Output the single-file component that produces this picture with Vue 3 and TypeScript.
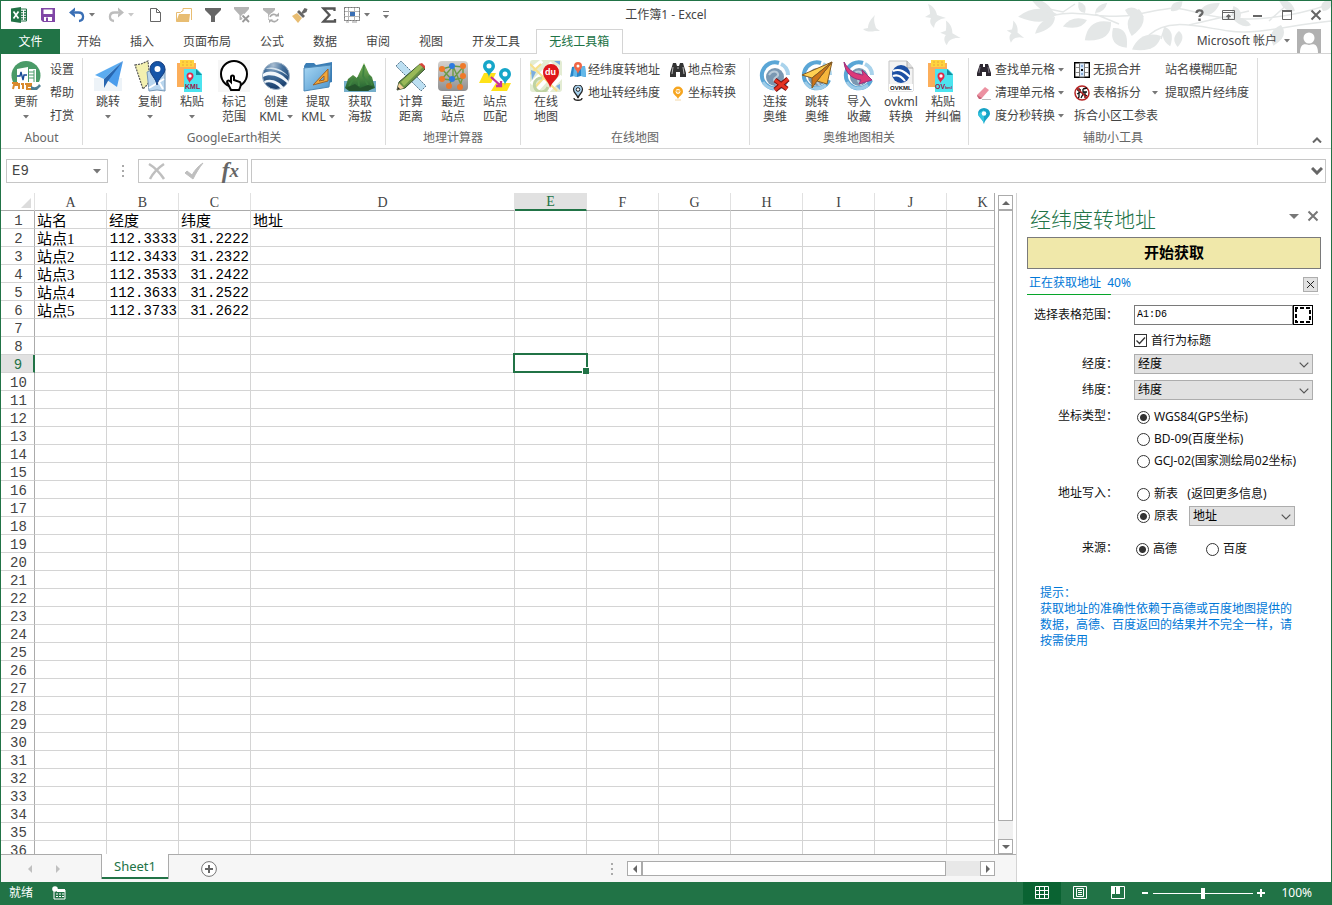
<script setup lang="ts">
import { ref } from 'vue'

interface BigButton { icon: string; lines: string[]; arrow?: boolean }
interface SmallButton { icon?: string; label: string; arrow?: boolean }
interface Group { key: string; title: string; big: BigButton[]; small: SmallButton[][] }
interface QuickItem { icon: string; label: string; arrow?: boolean; tight?: boolean }

const quickItems: QuickItem[] = [
  { icon: 'excel', label: 'Excel' },
  { icon: 'save', label: '保存' },
  { icon: 'undo', label: '撤消', arrow: true },
  { icon: 'redo', label: '恢复', arrow: true },
  { icon: 'new', label: '新建' },
  { icon: 'open', label: '打开' },
  { icon: 'funnel', label: '筛选' },
  { icon: 'funnelx', label: '清除筛选' },
  { icon: 'funnelr', label: '重新应用' },
  { icon: 'brush', label: '格式刷' },
  { icon: 'sigma', label: '求和' },
  { icon: 'gridsel', label: '边框', arrow: true, tight: true },
]

const tabs = ['开始', '插入', '页面布局', '公式', '数据', '审阅', '视图', '开发工具', '无线工具箱']
const activeTab = ref('无线工具箱')

const groups: Group[] = [
  {
    key: 'about', title: 'About',
    big: [{ icon: 'update', lines: ['更新'], arrow: true }],
    small: [[{ label: '设置' }, { label: '帮助' }, { label: '打赏' }]],
  },
  {
    key: 'earth', title: 'GoogleEarth相关',
    big: [
      { icon: 'plane', lines: ['跳转'], arrow: true },
      { icon: 'copymap', lines: ['复制'], arrow: true },
      { icon: 'paste', lines: ['粘贴'], arrow: true },
      { icon: 'touch', lines: ['标记', '范围'] },
      { icon: 'globe', lines: ['创建', 'KML'], arrow: true },
      { icon: 'folder', lines: ['提取', 'KML'], arrow: true },
      { icon: 'mountain', lines: ['获取', '海拔'] },
    ],
    small: [],
  },
  {
    key: 'calc', title: '地理计算器',
    big: [
      { icon: 'ruler', lines: ['计算', '距离'] },
      { icon: 'network', lines: ['最近', '站点'] },
      { icon: 'match', lines: ['站点', '匹配'] },
    ],
    small: [],
  },
  {
    key: 'online', title: '在线地图',
    big: [{ icon: 'dumap', lines: ['在线', '地图'] }],
    small: [
      [{ icon: 'mappin', label: '经纬度转地址' }, { icon: 'pin', label: '地址转经纬度' }],
      [{ icon: 'binoc', label: '地点检索' }, { icon: 'convert', label: '坐标转换' }],
    ],
  },
  {
    key: 'ovi', title: '奥维地图相关',
    big: [
      { icon: 'ovlink', lines: ['连接', '奥维'] },
      { icon: 'ovjump', lines: ['跳转', '奥维'] },
      { icon: 'ovimport', lines: ['导入', '收藏'] },
      { icon: 'ovkml', lines: ['ovkml', '转换'] },
      { icon: 'ovpaste', lines: ['粘贴', '并纠偏'] },
    ],
    small: [],
  },
  {
    key: 'tools', title: '辅助小工具',
    big: [],
    small: [
      [
        { icon: 'binoc2', label: '查找单元格', arrow: true },
        { icon: 'eraser', label: '清理单元格', arrow: true },
        { icon: 'teal', label: '度分秒转换', arrow: true },
      ],
      [{ icon: 'merge', label: '无损合并' }, { icon: 'split', label: '表格拆分', arrow: true }, { label: '拆合小区工参表' }],
      [{ label: '站名模糊匹配' }, { label: '提取照片经纬度' }],
    ],
  },
]

const columns = ['A', 'B', 'C', 'D', 'E', 'F', 'G', 'H', 'I', 'J', 'K']
const rowNumbers = Array.from({ length: 36 }, (_, i) => i + 1)
const cells: Record<string, string> = { A1: '站名', B1: '经度', C1: '纬度', D1: '地址' }
const points = [['112.3333', '31.2222'], ['112.3433', '31.2322'], ['112.3533', '31.2422'], ['112.3633', '31.2522'], ['112.3733', '31.2622']]
points.forEach(([lng, lat], i) => {
  cells[`A${i + 2}`] = `站点${i + 1}`
  cells[`B${i + 2}`] = lng
  cells[`C${i + 2}`] = lat
})
const isNumeric = (id: string) => /^\d/.test(cells[id] ?? '')

const range = ref('A1:D6')
const hasHeader = ref(true)
const coordType = ref('wgs')
const target = ref('old')
const source = ref('gaode')
const zoom = ref(50)

/* x, y, angle, length, half width of each leaf */
const leaves = [
  [208, 13, 176, 39, 13], [206, 16, 140, 26, 9], [205, 12, 212, 28, 8],
  [236, 12, 240, 13, 7], [246, 12, 320, 16, 6], [238, 19, 165, 25, 9], [262, 21, 145, 32, 17],
  [264, 27, 55, 24, 14], [290, 8, 105, 28, 15], [276, 9, 20, 20, 10], [312, 35, 155, 32, 14],
  [316, 26, 75, 20, 9], [330, 30, 95, 16, 8], [322, 10, 320, 15, 8], [350, 14, 330, 24, 10],
  [390, 20, 250, 16, 9], [402, 24, 200, 20, 7], [432, 24, 110, 22, 12], [446, 10, 215, 20, 8],
  [474, 10, 300, 14, 9],
]
/* x, y, rotation, scale of each bird */
const birds = [[87, 16, 0, 1], [102, 34, 12, 1], [167, 33, 20, 0.9]]
</script>

<template>
  <div class="window">
    <svg class="sprites" aria-hidden="true">
      <defs>
        <radialGradient id="gGlobe" cx=".4" cy=".1" r=".9"><stop offset="0" stop-color="#a9bed2" /><stop offset=".4" stop-color="#44709c" /><stop offset="1" stop-color="#173c6a" /></radialGradient>
        <linearGradient id="gFolder" x1="0" y1="0" x2="1" y2="1"><stop offset="0" stop-color="#a9d8f4" /><stop offset="1" stop-color="#4a93cc" /></linearGradient>
        <linearGradient id="gHill" x1="0" y1="0" x2="0" y2="1"><stop offset="0" stop-color="#7fb557" /><stop offset="1" stop-color="#1d5f30" /></linearGradient>
        <linearGradient id="gGrey" x1="0" y1="0" x2="0" y2="1"><stop offset="0" stop-color="#d5d2cf" /><stop offset="1" stop-color="#8f8f90" /></linearGradient>
        <symbol id="down" viewBox="0 0 6 4"><path d="M0 0h6L3 3.500z" fill="currentColor" /></symbol>
        <symbol id="excel" viewBox="0 0 16 16"><path d="M9 2h6.500v12H9z" fill="#fff" stroke="#217346" /><path d="M10 4.500h2M13 4.500h2M10 7h2M13 7h2M10 9.500h2M13 9.500h2M10 12h2M13 12h2" stroke="#217346" stroke-width="1.300" /><path d="M0 1.500 10 0v16L0 14.500z" fill="#217346" /><path d="M2.500 4.500 7.500 11.500M7.500 4.500l-5 7" stroke="#fff" stroke-width="1.700" /></symbol>
        <symbol id="save" viewBox="0 0 16 16"><path d="M1 1h14v14H3l-2-2z" fill="#8046a6" /><path d="M3.500 2.500h9V7h-9zM4 10h8v4H4z" fill="#fff" /><path d="M6 10.500h2v4H6z" fill="#8046a6" /></symbol>
        <symbol id="undo" viewBox="0 0 16 16"><path d="M2 5.500h7.500c6 0 6 8 .5 8.500" fill="none" stroke="#3a6fb5" stroke-width="2.300" /><path d="M0 5.500 6 .5v3L4 5.500l2 2v3z" fill="#3a6fb5" /></symbol>
        <symbol id="redo" viewBox="0 0 16 16"><path d="M14 5.500H6.500c-6 0-6 8-.5 8.500" fill="none" stroke="#bdbdbd" stroke-width="2.300" /><path d="m16 5.500-6-5v3l2 2-2 2v3z" fill="#bdbdbd" /></symbol>
        <symbol id="new" viewBox="0 0 16 16"><path d="M3.500 1.500h6l4 4v9h-10zM9.500 1.500v4h4" fill="#fff" stroke="#666" /></symbol>
        <symbol id="open" viewBox="0 0 16 16"><path d="M.5 14V5.500h4L6 4h1V1.500h8.500V13" fill="#fff" stroke="#e8bd72" /><path d="M0 15 3 7h11l-1 8z" fill="#e8bd72" /></symbol>
        <symbol id="funnel" viewBox="0 0 16 16"><path d="M0 1h16v2L10 9v6H6V9L0 3z" fill="#666" /></symbol>
        <symbol id="funnelx" viewBox="0 0 16 16"><path d="M0 0h15v2L9.500 8v5h-4V8L0 2z" fill="#b5b5b5" /><path d="m8 8 7 7M15 8l-7 7" stroke="#fff" stroke-width="4" /><path d="m8.500 8.500 6.500 6.500M15 8.500 8.500 15" stroke="#999" stroke-width="1.800" /></symbol>
        <symbol id="funnelr" viewBox="0 0 16 16"><path d="M0 1h12v2L8 7v6H5V7L0 3z" fill="#b5b5b5" /><circle cx="11" cy="11" r="5.500" fill="#fff" /><path d="M7 10a4 4 0 0 1 7-1M15 12a4 4 0 0 1-7 1" fill="none" stroke="#aaa" stroke-width="1.600" /><path d="M12 9.500h4V5.500zM10 12.500H6v3.500z" fill="#aaa" /></symbol>
        <symbol id="brush" viewBox="0 0 16 16"><path d="m0 9 5-3 5 5-4 5z" fill="#e8bd72" /><path d="m5 5 2-2 6 6-2 2z" fill="#666" /><path d="m9.500 5.500 3-4.500 3 1-1 3-4 2z" fill="#666" /></symbol>
        <symbol id="sigma" viewBox="0 0 16 16"><path d="M13.500 4V1.500h-11L8.500 8l-6 6.500h11.500V12" fill="none" stroke="#555" stroke-width="2.300" /></symbol>
        <symbol id="gridsel" viewBox="0 0 16 16"><path d="M.5.5h15v13H.5zM.5 4.500h15M.5 9.500h15M4.500.5v13M10.500.5v13" fill="#fff" stroke="#b5b5b5" /><path d="M6 5h5v4H6z" fill="#3a6fb5" /><path d="M.5.5h15v13H.5z" fill="none" stroke="#777" stroke-dasharray="2 1" /><path d="M2 15h3M8 15h5" stroke="#999" /></symbol>
        <symbol id="update" viewBox="0 0 32 32"><circle cx="16" cy="15.500" r="14.500" fill="#4a9b68" /><path d="M2 22h28v8H2z" fill="#fff" /><path d="m7 9 11-2v17L7 23zM19 9h7v13h-7z" fill="#fff" /><path d="M19 12h5M19 15h5M19 18h5M24 10v12" stroke="#4a9b68" /><path d="M7 16h3l1-4 2 8 1-5h3" fill="none" stroke="#174a96" stroke-width="1.400" /><path d="M2 23h5v2H4l-1 4M9 23v6M11 24h2v5M15 24h6v2h-4v3h4" stroke="#d98a2c" stroke-width="2" fill="none" /><path d="M21 25c2 4 7 2 8-1l2 2-4 4h-6z" fill="#4c7f93" /></symbol>
        <symbol id="plane" viewBox="0 0 32 32"><path d="M2 18h28v13H2z" fill="#edf3f8" /><path d="M31 1 3 15l9 4z" fill="#5cacf0" /><path d="M31 1 15 20l10 7z" fill="#4a9cec" /><path d="M31 1 12 19v9l4-7z" fill="#2766b0" /></symbol>
        <symbol id="copymap" viewBox="0 0 32 32"><path d="m1 5 6-1 7-3 2 20-4 5-3 3z" fill="#f3f0b0" stroke="#555" stroke-width="1.200" stroke-dasharray="2 1" /><path d="m13 12 5-2 13-1v22l-8-1-8 1z" fill="#b9d6ee" stroke="#7798b8" /><path d="m15 28 15-9M19 12l10 17" stroke="#fff" stroke-width="2" /><path d="M23 25C22 18 16 15 16 9a7.500 7.500 0 0 1 15 0c0 6-7 9-8 16z" fill="#1555a8" stroke="#143b7b" /><circle cx="23.500" cy="9" r="3" fill="#fff" /></symbol>
        <symbol id="pasteboard" viewBox="0 0 32 32"><path d="M1 3h19v24H1z" fill="#fcae5a" /><path d="M4 0h14v7H4z" fill="#ffd53e" /><path d="M6 2h2M10 2h2M14 2h2M6 5h2M10 5h2M14 5h2" stroke="#e8a63a" /><path d="M8 9h13l5 5v18H8z" fill="#4be4ef" /><path d="m20 9 6 6h-6z" fill="#138e9f" /><path d="M13.500 23c-1-3-3-4-3-7a3.500 3.500 0 1 1 7 0c0 3-3 4-4 7z" fill="#e22849" /><circle cx="14" cy="16" r="1.700" fill="#fff" /></symbol>
        <symbol id="paste" viewBox="0 0 32 32"><use href="#pasteboard" /><text x="9" y="29" font-size="7" font-weight="700" font-family="Liberation Sans" fill="#9d1748">KML</text></symbol>
        <symbol id="ovpaste" viewBox="0 0 32 32"><use href="#pasteboard" /><text x="8" y="29" font-size="7" font-weight="700" font-family="Liberation Sans" fill="#9d1748">OV<tspan font-size="4">kml</tspan></text></symbol>
        <symbol id="touch" viewBox="0 0 32 32"><path d="M0 0h32v32H0z" fill="#f6f6f6" /><circle cx="16" cy="14" r="13" fill="#fff" stroke="#000" stroke-width="2" /><path d="M9 22c0-2 2-2 4 0v-5c0-2 3-2 3 0v3l6 2c1 1 1 4-1 8h-8z" fill="#fff" stroke="#000" stroke-width="2" /></symbol>
        <symbol id="globe" viewBox="0 0 32 32"><circle cx="16" cy="16" r="13.500" fill="url(#gGlobe)" stroke="#9fb4c8" /><path d="M3 14c8-6 20 0 26 8l-1 2C20 16 10 13 3 17zM4 21c7-3 15 0 20 7l-3 1C16 23 10 21 5 23z" fill="#f1f6fa" /><path d="M7 8c8-2 16 2 22 9C23 12 14 8 6 9z" fill="#d7e4ee" /></symbol>
        <symbol id="folder" viewBox="0 0 32 32"><path d="m2 6 2-3h8l2 2 16-3v20L4 30z" fill="#3a7db5" /><path d="m2 8 27-3-2 22-25 4z" fill="url(#gFolder)" stroke="#4a88b8" /><path d="m11 25 15-4V9zM17 21l5-5v4z" fill="#f2a638" fill-rule="evenodd" stroke="#9b632b" /></symbol>
        <symbol id="mountain" viewBox="0 0 32 32"><path d="M0 20h32v12H0z" fill="#76afcb" /><path d="M0 12h32v9H0z" fill="#fff" /><path d="m1 28 3-9 5-4 4 3 7-15 5 11 3 3 3 11-8 3H5z" fill="url(#gHill)" /><path d="m20 5-1 11 5 9M10 18l-5 8M14 17l1 9M25 16l3 9" fill="none" stroke="#3f8340" stroke-width="1.800" /><path d="m2 28 9-4 5 4 8-3 6 2-6 4H7z" fill="#24542c" /></symbol>
        <symbol id="ruler" viewBox="0 0 32 32"><path d="m1 6 5-5 25 25-5 5z" fill="#bcdff2" stroke="#55758c" stroke-dasharray="2 1" /><path d="m2 30 2-8L25 4l5 5L10 28z" fill="#689145" stroke="#36512f" /><path d="m6 22 19-18 3 3L9 26z" fill="#99b958" /><path d="m24 4 3-1 3 3v3z" fill="#d6473b" /><path d="m2 30 2-7 5 5z" fill="#f3ce98" /><path d="m2 30 1-3 2 2z" fill="#222" /></symbol>
        <symbol id="network" viewBox="0 0 32 32"><rect x="1" y="1" width="30" height="30" rx="4" fill="url(#gGrey)" /><path d="M5 9 16 6l10 1M5 9l10 11M16 6 5 19M16 6v14M16 6l9 21M26 7 15 20M26 7v11L15 20 5 19M15 19 12 26M26 16l-3 10" fill="none" stroke="#6b9a45" stroke-width="1.400" /><g fill="#ee792a"><circle cx="5" cy="9" r="3" /><circle cx="26" cy="6" r="3" /><circle cx="26" cy="16" r="3" /><circle cx="5" cy="19" r="3" /><circle cx="12" cy="26" r="3" /><circle cx="23" cy="27" r="3" /></g><g fill="#2d7ae0"><circle cx="15" cy="6" r="3" /><circle cx="15" cy="19" r="3" /></g></symbol>
        <symbol id="match" viewBox="0 0 32 32"><path d="m0 23 5-10h12l-5 10zM12 31l5-8h15l-4 8z" fill="#ffe219" /><path d="m12 17 10 9m0-5v5h-5" fill="none" stroke="#c8329a" stroke-width="2.300" /><path d="M10 18C10 12 4 11 4 6a6 6 0 0 1 12 0c0 5-6 6-6 12zM26 26c0-7-6-7-6-12a6 6 0 0 1 12 0c0 5-6 6-6 12z" fill="#16a6c9" /><circle cx="10" cy="6" r="2.500" fill="#fff" /><circle cx="26" cy="14" r="2.500" fill="#fff" /></symbol>
        <symbol id="dumap" viewBox="0 0 32 32"><rect width="32" height="32" rx="3" fill="#e3ecd3" /><path d="M3 8 12 1M1 24 22 3M6 31 28 7M18 31 32 16" stroke="#fff" stroke-width="4" /><path d="M0 14 11 4M5 27l20-21M0 4l27 27" stroke="#f6e08a" stroke-width="2" /><path d="m1 10 5 2-4 8zM24 1h6v4zM26 26l4-2v6z" fill="#7aaee0" /><path d="M18 27a7 7 0 1 1-6-9" stroke="#bfd3a2" stroke-width="3" fill="none" /><path d="M20 28c-1-7-7-9-7-16a8 8 0 0 1 16 0c0 7-7 9-9 16z" fill="#df171a" /><text x="15" y="15" font-size="9" font-weight="700" font-family="Liberation Sans" fill="#fff">du</text></symbol>
        <symbol id="mappin" viewBox="0 0 16 16"><path d="m0 15 2-10 5-1 3 1 5-1 1 11-5-1-4 1-3-1z" fill="#2685c8" /><path d="m4 5-1 9 4 1V5zM11 5l4-1 1 11-5-1z" fill="#63b8e9" /><path d="M8 12C7 8 4 7 4 4a4 4 0 0 1 8 0c0 3-3 4-4 8z" fill="#f16645" /><circle cx="8" cy="4" r="1.500" fill="#fff" /></symbol>
        <symbol id="pin" viewBox="0 0 16 16"><path d="M8 13C7 9 3.500 8 3.500 4.500a4.500 4.500 0 0 1 9 0C12.500 8 9 9 8 13z" fill="#a8d3f0" stroke="#222" stroke-width="1.200" /><circle cx="8" cy="4.500" r="1.800" fill="#fff" stroke="#222" /><path d="M4 13c0 3 8 3 8 0" fill="none" stroke="#222" stroke-width="1.300" /></symbol>
        <symbol id="binoc" viewBox="0 0 16 16"><path d="M3 1h3l1 3h2l1-3h3l3 10v4h-6v-5H6v5H0v-4z" fill="#333" /><path d="m3 5-1 7M13 5l1 7M7 6h2" stroke="#b5b5b5" /></symbol>
        <symbol id="binoc2" viewBox="0 0 16 16"><path d="M4 2h3v3h2V2h3l3 9v3h-5v-4H6v4H1v-3z" fill="#2c2730" /><path d="m4 5-1 6M12 5l1 6" stroke="#776f7c" /></symbol>
        <symbol id="convert" viewBox="0 0 16 16"><path d="M8 14C7 11 3 10 3 6.500a5 5 0 0 1 10 0C13 10 9 11 8 14z" fill="#f6a51f" /><circle cx="8" cy="6.500" r="2.400" fill="#fff" /><path d="M8 5v3M6 6h4" stroke="#f6a51f" /><path d="M5 15h6" stroke="#f3d8a6" /></symbol>
        <symbol id="ovglobe" viewBox="0 0 32 32"><path d="M20 3A13 13 0 1 0 28 20" fill="none" stroke="#5aa6d6" stroke-width="4" /><path d="M22 4a12 12 0 0 1 7 11" fill="none" stroke="#a9d3ec" stroke-width="4" /><circle cx="16" cy="17" r="9" fill="#7a98b2" /><path d="M10 15c3-5 8-4 9-1s-4 3-4 6 3 3 3 5" stroke="#b9cbd8" stroke-width="2" fill="none" /><path d="M4 22c4 7 14 9 21 3" fill="none" stroke="#9ccbe8" stroke-width="3" /></symbol>
        <symbol id="ovlink" viewBox="0 0 32 32"><use href="#ovglobe" /><path d="m16 20 12 9M29 19 16 30" stroke="#761010" stroke-width="5" /><path d="m16 20 12 9M29 19 16 30" stroke="#e53322" stroke-width="3" /></symbol>
        <symbol id="ovjump" viewBox="0 0 32 32"><use href="#ovglobe" /><path d="M31 2 1 15l10 3z" fill="#ffd052" stroke="#825a23" /><path d="M31 2 16 21l10 3z" fill="#f6b63c" stroke="#825a23" /><path d="M31 2 11 18v10l5-7z" fill="#cc741a" stroke="#825a23" /></symbol>
        <symbol id="ovimport" viewBox="0 0 32 32"><use href="#ovglobe" /><path d="M1 2c5 9 11 12 19 13l-1-5 10 10-13 4 2-4C9 19 2 13 1 2z" fill="#dc3a78" stroke="#9a2f7c" /></symbol>
        <symbol id="ovkml" viewBox="0 0 32 32"><path d="M4 1h18l6 7v23H4z" fill="#f3f3f3" stroke="#c5c5c5" /><path d="M22 1v7h6" fill="#ddd" stroke="#aaa" /><circle cx="16" cy="14" r="9" fill="#1d50a4" /><path d="M8 11c7-3 12 1 17 6M8 16c5-2 9 1 12 5" stroke="#fff" stroke-width="2" fill="none" /><path d="M4 24h24v7H4z" fill="#fff" /><text x="5" y="30" font-size="6" font-weight="700" font-family="Liberation Sans" fill="#111">OVKML</text></symbol>
        <symbol id="eraser" viewBox="0 0 16 16"><path d="M1 10 9 2l4 3-7 8H3z" fill="#ec91a1" /><path d="m1 10 5 3-1 1H3l-2-3z" fill="#c96378" /><path d="M6 14.500h9" stroke="#bbb" /></symbol>
        <symbol id="teal" viewBox="0 0 16 16"><path d="M8 16C7 11 2 9 2 5.500a6 5.500 0 0 1 12 0C14 9 9 11 8 16z" fill="#17a3c6" /><path d="M8 16C7 11 2 9 2 5.500L8 2z" fill="#34c4df" /><circle cx="8" cy="5.500" r="2.300" fill="#fff" /></symbol>
        <symbol id="merge" viewBox="0 0 16 16"><path d="M.7.7h14.600v14.600H.7z" fill="#fff" stroke="#000" stroke-width="1.400" /><path d="M1 5.500h14M1 10.500h14" stroke="#888" /><path d="M5.500 1h5v14h-5z" fill="#d7e8fa" stroke="#777" /><path d="M8 3v2M8 11v2" stroke="#3a6fb5" /><path d="M7 8h2M8 7v2" stroke="#000" stroke-width="1.600" /></symbol>
        <symbol id="split" viewBox="0 0 16 16"><circle cx="8" cy="8" r="7" fill="#fff" stroke="#b62323" stroke-width="1.500" /><path d="M3 5h4M5 3v9l-1 1M3 9l4-2M9 4l4-1M9 4v5l-2 4M9 7h4M11 7v6M10 9l3 2" stroke="#111" stroke-width="1.300" fill="none" /><path d="m3 3 10 10" stroke="#b62323" stroke-width="1.500" /></symbol>
      </defs>
    </svg>

    <header class="top">
      <svg class="decor" viewBox="0 0 482 52" aria-hidden="true">
        <g fill="none" stroke="#e4e7e7" stroke-width="1.500">
          <path d="M206 14c25-6 50 6 84-1s35-8 60-1 70 12 132-9M300 34c20-18 50-8 80-4s60-6 102-10M246 13l24 10M340 24l60-14M316 26l-4 12M420 20l20-18M200 8l14 3 12-8" />
        </g>
        <g fill="#e4e7e7">
          <path v-for="(l, i) in leaves" :key="i" :transform="`translate(${l[0]} ${l[1]}) rotate(${l[2]})`" :d="`M0 0Q${l[3] / 3} ${-l[4]} ${l[3]} 0Q${l[3] / 2} ${l[4]} 0 0`" />
          <path d="M26 14c-4 4-7 8-7 13l-5 1c3 3 8 3 12 2l5 0-4-3c-1-4-3-8-1-13z" />
          <path v-for="(b, i) in birds" :key="'b' + i" :transform="`translate(${b[0]} ${b[1]}) rotate(${b[2]}) scale(${b[3]})`" d="M-8-13c5 2 8 6 9 11l9 3-5 1c-3 2-6 2-7 9-3-3-5-6-3-10l-6-1 5-3c0-4-1-7-2-10z" />
        </g>
      </svg>

      <div class="titlebar">
        <div class="quick">
          <button v-for="q in quickItems" :key="q.icon" type="button" class="q" :class="{ tight: q.tight }" :aria-label="q.label">
            <svg class="i16"><use :href="'#' + q.icon" /></svg>
            <svg v-if="q.arrow" class="arrow" :class="{ pale: q.icon === 'redo' }"><use href="#down" /></svg>
          </button>
          <button type="button" class="q" aria-label="自定义快速访问工具栏">
            <svg class="more" viewBox="0 0 6 8"><path d="M0 .5h6" stroke="#777" /><path d="M0 4h6L3 7.500z" fill="#777" /></svg>
          </button>
        </div>
        <h1>工作簿1 - Excel</h1>
        <div class="controls">
          <button type="button" aria-label="帮助"><svg class="i16" viewBox="0 0 16 16"><path d="M4.500 6c0-3.500 6-3.500 6-.5 0 2.500-3 2.500-3 4.500" fill="none" stroke="#666" stroke-width="2.300" /><path d="M6.300 11.500h2.400v2.400H6.300z" fill="#666" /></svg></button>
          <button type="button" aria-label="功能区显示选项"><svg class="i16" viewBox="0 0 16 16"><path d="M1.500 3.500h12v9h-12zM1.500 5.500h12" fill="none" stroke="#666" /><path d="M7.500 12V8.500M5.500 10l2-2 2 2" fill="none" stroke="#666" stroke-width="1.500" /></svg></button>
          <button type="button" aria-label="最小化"><svg class="i16" viewBox="0 0 16 16"><path d="M3 9h9" stroke="#666" stroke-width="2" /></svg></button>
          <button type="button" aria-label="最大化"><svg class="i16" viewBox="0 0 16 16"><path d="M3.500 3.500h9v9h-9z" fill="none" stroke="#666" /><path d="M3 4h10" stroke="#666" stroke-width="2" /></svg></button>
          <button type="button" aria-label="关闭"><svg class="i16" viewBox="0 0 16 16"><path d="m3.500 3.500 9 9M12.500 3.500l-9 9" stroke="#666" stroke-width="2" /></svg></button>
        </div>
      </div>

      <nav class="tabs">
        <button type="button" class="file">文件</button>
        <button v-for="t in tabs" :key="t" type="button" class="tab" :class="{ active: t === activeTab }" @click="activeTab = t">{{ t }}</button>
        <button type="button" class="account">
          Microsoft 帐户
          <svg class="arrow"><use href="#down" /></svg>
          <svg class="avatar" viewBox="0 0 24 24"><path d="M0 0h24v24H0z" fill="#b1b1b1" /><circle cx="12" cy="9" r="5.500" fill="#fff" /><path d="M3 24c0-9 4-10 9-8 5-2 9-1 9 8z" fill="#fff" /></svg>
        </button>
      </nav>
    </header>

    <section class="ribbon">
      <div v-for="g in groups" :key="g.key" class="group" :class="g.key">
        <div class="items">
          <button v-for="b in g.big" :key="b.icon" type="button" class="big">
            <svg class="i32"><use :href="'#' + b.icon" /></svg>
            <span class="cap">{{ b.lines[0] }}</span>
            <span class="cap row">{{ b.lines[1] }}<svg v-if="b.arrow" class="arrow"><use href="#down" /></svg></span>
          </button>
          <div v-for="(col, ci) in g.small" :key="ci" class="col">
            <button v-for="s in col" :key="s.label" type="button" class="small">
              <svg v-if="s.icon" class="i16"><use :href="'#' + s.icon" /></svg>
              <span>{{ s.label }}</span>
              <svg v-if="s.arrow" class="arrow end"><use href="#down" /></svg>
            </button>
          </div>
        </div>
        <div class="gtitle">{{ g.title }}</div>
      </div>
      <button type="button" class="collapse" aria-label="折叠功能区"><svg viewBox="0 0 10 6"><path d="m1 5.500 4-4 4 4" fill="none" stroke="#666" stroke-width="2" /></svg></button>
    </section>

    <section class="formula">
      <label class="namebox"><input value="E9" aria-label="名称框" /><svg viewBox="0 0 8 5"><path d="M0 0h8L4 4.500z" fill="#777" /></svg></label>
      <svg class="dots" viewBox="0 0 2 12"><path d="M0 0h2v2H0zM0 5h2v2H0zM0 10h2v2H0z" fill="#aaa" /></svg>
      <div class="fx">
        <button type="button" aria-label="取消"><svg viewBox="0 0 20 20"><path d="M2 3c5 3 11 9 15 15M17 3C11 7 6 12 3 18" fill="none" stroke="#bfbfbf" stroke-width="2.500" /></svg></button>
        <button type="button" aria-label="输入"><svg viewBox="0 0 20 20"><path d="m1 12 2-2 5 4C11 9 14 5 19 2c-4 5-7 10-10 16z" fill="#bfbfbf" stroke="#bfbfbf" /></svg></button>
        <button type="button" class="fn" aria-label="插入函数"><i>f</i><i class="x">x</i></button>
      </div>
      <label class="bar"><input value="" aria-label="编辑栏" /><svg viewBox="0 0 12 8"><path d="m1 1 5 5 5-5" fill="none" stroke="#666" stroke-width="3" /></svg></label>
    </section>

    <main class="work">
      <div class="book">
        <div class="sheetrow">
          <div class="viewport">
            <table>
              <colgroup><col class="cn" /><col v-for="c in columns" :key="c" :class="'c' + c" /></colgroup>
              <thead>
                <tr>
                  <th class="corner"><svg viewBox="0 0 10 10"><path d="M10 0v10H0z" fill="#dcdcdc" /></svg></th>
                  <th v-for="c in columns" :key="c" scope="col" :class="{ on: c === 'E' }">{{ c }}</th>
                </tr>
              </thead>
              <tbody>
                <tr v-for="r in rowNumbers" :key="r">
                  <th scope="row" :class="{ on: r === 9 }">{{ r }}</th>
                  <td v-for="c in columns" :key="c" :class="{ num: isNumeric(c + r), sel: c === 'E' && r === 9 }">
                    {{ cells[c + r] }}<span v-if="c === 'E' && r === 9" class="cursor"></span>
                  </td>
                </tr>
              </tbody>
            </table>
          </div>
          <div class="vscroll">
            <button type="button" aria-label="向上"><svg viewBox="0 0 8 8"><path d="M0 6h8L4 2z" fill="#666" /></svg></button>
            <div class="vthumb"></div>
            <div class="vtrack"></div>
            <button type="button" aria-label="向下"><svg viewBox="0 0 8 8"><path d="M0 2h8L4 6z" fill="#666" /></svg></button>
          </div>
        </div>
        <div class="sheetbar">
          <div class="navs">
            <button type="button" aria-label="上一个"><svg viewBox="0 0 8 8"><path d="M6 0v8L2 4z" fill="#c0c0c0" /></svg></button>
            <button type="button" aria-label="下一个"><svg viewBox="0 0 8 8"><path d="M2 0v8l4-4z" fill="#c0c0c0" /></svg></button>
          </div>
          <button type="button" class="sheettab">Sheet1</button>
          <button type="button" class="plus" aria-label="新工作表"><svg viewBox="0 0 16 16"><circle cx="8" cy="8" r="7.400" fill="#fff" stroke="#777" /><path d="M8 4v8M4 8h8" stroke="#666" stroke-width="2" /></svg></button>
          <svg class="dots push" viewBox="0 0 2 12"><path d="M0 0h2v2H0zM0 5h2v2H0zM0 10h2v2H0z" fill="#aaa" /></svg>
          <div class="hscroll">
            <button type="button" aria-label="向左"><svg viewBox="0 0 8 8"><path d="M6 0v8L2 4z" fill="#666" /></svg></button>
            <div class="hthumb"></div>
            <div class="htrack"></div>
            <button type="button" aria-label="向右"><svg viewBox="0 0 8 8"><path d="M2 0v8l4-4z" fill="#666" /></svg></button>
          </div>
        </div>
      </div>

      <aside class="pane">
        <div class="phead">
          <h2>经纬度转地址</h2>
          <button type="button" aria-label="任务窗格选项"><svg class="pa" viewBox="0 0 10 5"><path d="M0 0h10L5 5z" fill="#777" /></svg></button>
          <button type="button" aria-label="关闭窗格"><svg class="px" viewBox="0 0 12 12"><path d="m1.500 1.500 9 9M10.500 1.500l-9 9" stroke="#777" stroke-width="2" /></svg></button>
        </div>
        <button type="button" class="start">开始获取</button>
        <div class="progress">
          <span>正在获取地址&nbsp; 40%</span>
          <button type="button" aria-label="取消获取"><svg viewBox="0 0 9 9"><path d="m1 1 7 7M8 1 1 8" stroke="#222" /></svg></button>
        </div>
        <div class="meter" role="progressbar" aria-label="正在获取地址" aria-valuenow="40"><div></div></div>

        <form class="form" @submit.prevent>
          <label class="lab" for="range">选择表格范围：</label>
          <div class="rangebox">
            <input id="range" v-model="range" type="text" />
            <button type="button" aria-label="选择区域"><svg viewBox="0 0 18 18"><rect x="2" y="2" width="14" height="14" fill="none" stroke="#000" stroke-width="2" stroke-dasharray="4 2" stroke-dashoffset="2" /></svg></button>
          </div>
          <label class="opt check"><input v-model="hasHeader" type="checkbox" /><svg class="tick" viewBox="0 0 13 13"><path d="m2.500 6.500 3 3 5.500-6" fill="none" stroke="#333" stroke-width="1.300" /></svg>首行为标题</label>
          <label class="lab" for="lng">经度：</label>
          <div class="pick"><select id="lng"><option>经度</option></select><svg viewBox="0 0 10 6"><path d="m.7.7 4.300 4.300L9.300.7" fill="none" stroke="#555" stroke-width="1.200" /></svg></div>
          <label class="lab" for="lat">纬度：</label>
          <div class="pick"><select id="lat"><option>纬度</option></select><svg viewBox="0 0 10 6"><path d="m.7.7 4.300 4.300L9.300.7" fill="none" stroke="#555" stroke-width="1.200" /></svg></div>
          <span class="lab">坐标类型：</span>
          <div class="stack">
            <label class="opt"><input v-model="coordType" type="radio" name="type" value="wgs" />WGS84(GPS坐标)</label>
            <label class="opt"><input v-model="coordType" type="radio" name="type" value="bd" />BD-09(百度坐标)</label>
            <label class="opt"><input v-model="coordType" type="radio" name="type" value="gcj" />GCJ-02(国家测绘局02坐标)</label>
          </div>
          <span class="lab far">地址写入：</span>
          <div class="stack far">
            <label class="opt"><input v-model="target" type="radio" name="target" value="new" />新表 &nbsp; (返回更多信息)</label>
            <div class="line">
              <label class="opt"><input v-model="target" type="radio" name="target" value="old" />原表</label>
              <div class="pick narrow"><select aria-label="地址列"><option>地址</option></select><svg viewBox="0 0 10 6"><path d="m.7.7 4.300 4.300L9.300.7" fill="none" stroke="#555" stroke-width="1.200" /></svg></div>
            </div>
          </div>
          <span class="lab far">来源：</span>
          <div class="line sources far">
            <label class="opt"><input v-model="source" type="radio" name="source" value="gaode" />高德</label>
            <label class="opt"><input v-model="source" type="radio" name="source" value="baidu" />百度</label>
          </div>
        </form>
        <p class="tip">提示：<br />获取地址的准确性依赖于高德或百度地图提供的数据，高德、百度返回的结果并不完全一样，请按需使用</p>
      </aside>
    </main>

    <footer class="status">
      <span>就绪</span>
      <svg class="rec" viewBox="0 0 14 14"><path d="M2 4h11v9H2z" fill="none" stroke="#fff" /><path d="M5 3h8v3H5z" fill="#fff" /><path d="M4 8h2M7 8h2M10 8h2M4 10.500h2M7 10.500h2M10 10.500h2" stroke="#fff" /><circle cx="3" cy="3" r="2.800" fill="#fff" /></svg>
      <div class="views">
        <button type="button" class="on" aria-label="普通"><svg viewBox="0 0 14 14"><path d="M.5.5h13v12H.5zM.5 4.500h13M.5 8.500h13M4.500.5v12M9.500.5v12" fill="none" stroke="#fff" /></svg></button>
        <button type="button" aria-label="页面布局"><svg viewBox="0 0 14 14"><path d="M.5.5h13v12H.5zM3.500 2.500h7v8h-7zM5 4.500h4M5 6.500h4M5 8.500h4" fill="none" stroke="#fff" /></svg></button>
        <button type="button" aria-label="分页预览"><svg viewBox="0 0 14 14"><path d="M.5.500h13v12H.5z" fill="none" stroke="#fff" /><path d="M0 0h4v8H0zM5 0h4v8H5z" fill="#fff" /></svg></button>
      </div>
      <button type="button" class="zb" aria-label="缩小"><svg viewBox="0 0 8 8"><path d="M1 4h6" stroke="#fff" stroke-width="2" /></svg></button>
      <input v-model="zoom" class="zoom" type="range" min="0" max="100" aria-label="缩放" />
      <button type="button" class="zb" aria-label="放大"><svg viewBox="0 0 8 8"><path d="M0 4h8M4 0v8" stroke="#fff" stroke-width="2" /></svg></button>
      <span class="pct">100%</span>
    </footer>
  </div>
</template>

<style>
body { margin: 0; overflow: hidden; }
</style>

<style scoped>
.window { box-sizing: border-box; height: 100vh; display: flex; flex-direction: column; border: 1px solid #217346; background: #fff; color: #444; font: 12px/16px "Noto Sans", "Noto Sans CJK SC", sans-serif; }
.window * { box-sizing: border-box; }
.sprites { position: absolute; width: 0; height: 0; }
button { margin: 0; padding: 0; border: 0; background: none; color: inherit; font: inherit; display: flex; align-items: center; justify-content: center; white-space: nowrap; }
input, select { font: inherit; color: inherit; margin: 0; }
svg { display: block; flex: none; }
.i16 { width: 16px; height: 16px; }
.i32 { width: 32px; height: 32px; }
.arrow { width: 6px; height: 4px; color: #777; }
.pale { color: #c8c8c8; }

.top { position: relative; flex: none; }
.decor { position: absolute; right: 0; top: 0; width: 482px; height: 52px; }
.titlebar { position: relative; display: grid; grid-template-columns: 1fr auto 1fr; align-items: center; height: 28px; }
.quick { display: flex; align-items: center; gap: 13px; padding-left: 10px; }
.q { gap: 4px; }
.tight { margin-left: -6px; }
.more { width: 6px; height: 8px; }
h1 { margin: 0; font-size: 12px; font-weight: 400; }
.controls { display: flex; justify-content: flex-end; gap: 13px; padding-right: 7px; }
.tabs { position: relative; display: flex; gap: 2px; height: 25px; border-bottom: 1px solid #d4d4d4; }
.file { width: 59px; height: 25px; background: #217346; color: #fff; margin-right: 2px; }
.tab { height: 25px; padding: 0 13px 0 12px; border: 1px solid transparent; border-bottom: 0; }
.tab.active { background: #fff; border-color: #d4d4d4; color: #217346; }
.account { margin-left: auto; height: 24px; padding-right: 10px; gap: 7px; }
.avatar { width: 24px; height: 24px; }

.ribbon { flex: none; position: relative; display: flex; height: 95px; padding-top: 4px; border-bottom: 1px solid #d4d4d4; }
.group { height: 87px; display: flex; flex-direction: column; border-right: 1px solid #dcdcdc; padding: 0 4px; }
.items { display: flex; height: 72px; }
.gtitle { text-align: center; color: #666; line-height: 15px; }
.about { min-width: 82px; }
.online { min-width: 229px; }
.tools { min-width: 289px; }
.big { width: 42px; flex-direction: column; justify-content: flex-start; padding-top: 2px; }
.cap { line-height: 15px; height: 15px; }
.i32 + .cap { margin-top: 2px; }
.row { display: flex; align-items: center; gap: 3px; }
.col { display: flex; flex-direction: column; padding-left: 3px; margin-right: 4px; }
.about .col { margin-right: 0; }
.online .col, .tools .col:first-child { margin-right: 7px; }
.small { height: 23px; gap: 2px; justify-content: flex-start; }
.end { margin-left: auto; }
.tools .small { gap: 3px; }
.collapse { position: absolute; right: 9px; bottom: 5px; }
.collapse svg { width: 10px; height: 6px; }

.formula { flex: none; display: flex; align-items: center; height: 44px; padding: 0 5px; font-family: "Liberation Mono", "Noto Sans CJK SC", monospace; }
.namebox, .fx, .bar { display: flex; align-items: center; height: 24px; border: 1px solid #c6c6c6; background: #fff; }
.namebox { width: 102px; padding: 0 6px 0 5px; }
.namebox input, .bar input { border: 0; outline: 0; padding: 0; min-width: 0; flex: 1; background: none; font-size: 14px; }
.namebox svg { width: 8px; height: 5px; }
.dots { width: 2px; height: 12px; margin: 0 14px; }
.fx { width: 110px; justify-content: space-between; padding: 0 8px; }
.fx svg { width: 20px; height: 20px; }
.fn { font: 700 23px/22px "Liberation Serif", serif; color: #666; }
.fn .x { font-size: 19px; }
.bar { flex: 1; margin-left: 3px; padding: 0 2px 0 5px; }
.bar svg { width: 12px; height: 8px; }

.work { flex: 1; min-height: 0; display: flex; }
.book { flex: 1; min-width: 0; display: flex; flex-direction: column; background: #fff; }
.sheetrow { flex: 1; min-height: 0; display: flex; }
.viewport { flex: 1; min-width: 0; overflow: hidden; border-right: 1px solid #ababab; }
table { width: 1018px; table-layout: fixed; border-collapse: separate; border-spacing: 0; font: 15px/14px "Liberation Serif", "Noto Sans CJK SC", serif; color: #000; }
.cn { width: 34px; }
.cA, .cB, .cC, .cE, .cF, .cG, .cH, .cI, .cJ, .cK { width: 72px; }
.cD { width: 264px; }
th, td { height: 18px; padding: 3px 2px 0; border-right: 1px solid #d4d4d4; border-bottom: 1px solid #d4d4d4; font-weight: 400; white-space: nowrap; }
th { color: #444; text-align: center; }
thead th { padding: 2px 0 0; font-size: 14px; border-bottom-color: #ababab; border-right-color: #e1e1e1; }
thead th.on { background: #e1e1e1; color: #217346; border-bottom: 2px solid #217346; }
tbody th { padding-right: 0; font: 14px/14px "Liberation Mono", monospace; border-right-color: #ababab; }
tbody th.on { background: #e1e1e1; color: #217346; border-right: 2px solid #217346; }
thead th.corner { padding: 0; }
.corner svg { width: 10px; height: 10px; margin: 3px 3px 0 auto; }
.num { text-align: right; padding-right: 1px; font: 14px/14px "Liberation Mono", monospace; }
.sel { position: relative; }
.cursor { position: absolute; inset: -2px -2px -1px -2px; border: 2px solid #217346; }
.cursor::after { content: ""; position: absolute; right: -3px; bottom: -3px; width: 6px; height: 6px; background: #217346; border: solid #fff; border-width: 1px 0 0 1px; }
.vscroll { display: flex; flex-direction: column; width: 15px; margin: 2px 3px 0; background: #f0f0f0; }
.vscroll button, .hscroll button { flex: none; width: 15px; height: 15px; background: #fff; border: 1px solid #ababab; }
.vscroll svg, .hscroll svg, .navs svg { width: 8px; height: 8px; }
.vthumb { flex: 1; background: #fff; border: 1px solid #ababab; }
.vtrack { flex: none; height: 18px; }
.sheetbar { flex: none; display: flex; align-items: center; height: 28px; padding-right: 21px; background: #f6f6f6; border-top: 1px solid #ababab; }
.navs { display: flex; gap: 20px; padding-left: 25px; width: 100px; }
.sheettab { align-self: flex-start; height: 25px; margin-top: -1px; padding: 0 12px 1px; background: #fff; border: solid #ababab; border-width: 0 1px; box-shadow: inset 0 -2px #217346; color: #217346; font-size: 13px; }
.plus { margin-left: 32px; }
.plus svg { width: 16px; height: 16px; }
.push { margin-left: auto; }
.hscroll { display: flex; width: 368px; background: #e8e8e8; }
.hthumb { flex: 1; background: #fff; border: 1px solid #ababab; }
.htrack { width: 34px; }

.pane { width: 315px; flex: none; border-left: 1px solid #d4d4d4; padding: 10px 10px 0; color: #222; }
.phead { display: flex; align-items: center; height: 34px; padding: 0 2px 0 3px; gap: 8px; }
.phead button { margin-top: -8px; }
h2 { flex: 1; margin: 0; padding-bottom: 2px; font-size: 21px; line-height: 32px; font-weight: 300; color: #217346; }
.pa { width: 10px; height: 5px; }
.px { width: 12px; height: 12px; }
.start { width: 100%; height: 32px; padding-bottom: 3px; background: #f0e8aa; border: 1px solid #7a7a7a; color: #000; font-size: 15px; font-weight: 700; }
.progress { display: flex; align-items: center; justify-content: space-between; height: 25px; padding: 3px 3px 0 2px; color: #0078d7; }
.progress button { width: 15px; height: 15px; margin-top: 2px; background: #e1e1e1; border: 1px solid #adadad; }
.progress svg { width: 9px; height: 9px; }
.meter { height: 1px; margin-right: 2px; background: #e0e0e0; }
.meter div { width: 84px; height: 1px; background: #06a52a; }
.form { display: grid; grid-template-columns: 86px 1fr; column-gap: 16px; row-gap: 6px; padding: 10px 8px 0 5px; color: #111; }
.lab { text-align: right; line-height: 20px; white-space: nowrap; }
.rangebox { display: flex; height: 20px; }
.rangebox input { flex: 1; min-width: 0; border: 1px solid #7a7a7a; padding: 0 2px; font: 10px/16px "Liberation Mono", monospace; color: #000; }
.rangebox button { width: 20px; border: 1px solid #000; background: #fff; }
.rangebox svg { width: 18px; height: 18px; }
.opt { display: flex; align-items: center; gap: 4px; height: 22px; white-space: nowrap; }
.opt input { appearance: none; flex: none; width: 13px; height: 13px; border: 1px solid #333; background: #fff; }
.opt input[type="radio"] { border-radius: 50%; }
.opt input[type="radio"]:checked { background: radial-gradient(circle, #333 0 3px, #fff 4px); }
.check { grid-column: 2; position: relative; height: 17px; padding-top: 2px; }
.tick { position: absolute; left: 0; top: 3px; width: 13px; height: 13px; }
.check input:not(:checked) + .tick { display: none; }
.pick { position: relative; height: 20px; }
.pick select { display: block; appearance: none; width: 100%; height: 20px; padding: 0 3px; border: 1px solid #adadad; border-radius: 0; background: #e1e1e1; color: #000; }
.pick svg { position: absolute; right: 4px; top: 8px; width: 10px; height: 6px; }
.stack { padding-left: 3px; margin-right: -8px; }
.far { margin-top: 5px; }
.line { display: flex; align-items: center; gap: 11px; }
.narrow { width: 106px; }
.sources { padding-left: 2px; gap: 29px; height: 22px; }
.tip { margin: 25px 0 0; padding: 0 28px 0 13px; color: #0078d7; line-height: 16px; }

.status { flex: none; display: flex; align-items: center; height: 22px; padding: 0 19px 0 8px; background: #217346; color: #fff; }
.rec { width: 14px; height: 14px; margin-left: 19px; }
.views { margin-left: auto; display: flex; height: 22px; }
.views button { width: 38px; }
.views .on { background: #0a6332; }
.views svg { width: 14px; height: 14px; }
.zb { width: 8px; margin-left: 4px; }
.zb svg { width: 8px; height: 8px; }
.zoom { appearance: none; width: 100px; height: 12px; margin-left: 4px; background: linear-gradient(#fff, #fff) center / 100% 1px no-repeat; }
.zoom::-webkit-slider-thumb { appearance: none; width: 4px; height: 11px; background: #fff; }
.pct { margin-left: 16px; }
</style>
